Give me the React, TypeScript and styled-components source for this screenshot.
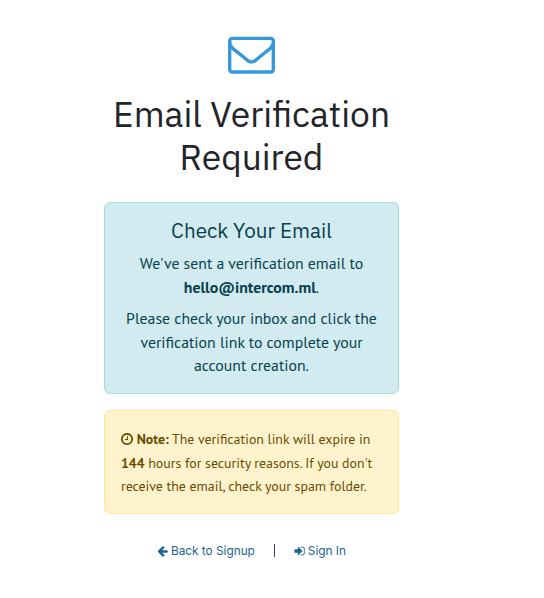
import React from "react";
import styled, { createGlobalStyle } from "styled-components";

const GlobalStyle = createGlobalStyle`
  *, *::before, *::after { box-sizing: border-box; }
  body { margin: 0; background: #fff; color: #212529; }
`;

const Page = styled.main`
  width: 295px;
  margin: 0 0 0 104px;
  padding-top: 31px;
  font-family: "PT Sans", "Noto Sans", sans-serif;
`;

const Header = styled.header`
  display: flex;
  flex-direction: column;
  align-items: center;
`;

const Title = styled.h1`
  margin: 16px 0 0;
  font: 400 35.4px/43px "IBM Plex Sans", Roboto, sans-serif;
  text-align: center;
`;

const Line = styled.span`
  display: block;
  white-space: nowrap;
`;

const Strong = styled.strong`
  font-weight: 700;
`;

const Alert = styled.section<{ $tone: "info" | "warning" }>`
  border: 1px solid ${(p) => (p.$tone === "info" ? "#a2dbe4" : "#ffe69c")};
  border-radius: 6px;
  background: ${(p) => (p.$tone === "info" ? "#d1ebf0" : "#fff3cd")};
  color: ${(p) => (p.$tone === "info" ? "#08414c" : "#664d03")};
`;

const InfoAlert = styled(Alert)`
  height: 192px;
  margin-top: 23px;
  padding: 15px 0;
  text-align: center;
`;

const NoteAlert = styled(Alert)`
  height: 104px;
  margin-top: 16px;
  padding: 17px 16px;
  font-size: 13.86px;
  line-height: 23.6px;
`;

const AlertTitle = styled.h2`
  margin: 0 0 9px;
  font: 400 20.65px/25px "IBM Plex Sans", Roboto, sans-serif;
`;

const Paragraph = styled.p`
  margin: 0 0 8px;
  font-size: 15.8px;
  line-height: 23.6px;
`;

const Links = styled.nav`
  display: flex;
  align-items: center;
  height: 20px;
  margin-top: 27px;
  padding-left: 53px;
  color: #1b6394;
  font: 400 11.8px/20px Inter, sans-serif;
`;

const Link = styled.a`
  display: inline-flex;
  align-items: center;
  gap: 2px;
  color: inherit;
  text-decoration: none;
  white-space: nowrap;
`;

const Divider = styled.span`
  width: 1px;
  height: 13px;
  margin: -2px 19px 0;
  background: #3c3b85;
`;

const Glyph = styled.svg<{ $size: number }>`
  width: ${(p) => p.$size}px;
  height: ${(p) => p.$size}px;
  flex: none;
  fill: currentColor;
`;

const EnvelopeGlyph = styled(Glyph)`
  margin: -1px 0 0;
  color: #3498db;
`;

const ClockGlyph = styled(Glyph)`
  vertical-align: -2px;
  margin: 0 -1px 0 -1px;
`;

const paths = {
  envelope:
    "M1664 1504v-768q-32 36-69 66-268 206-426 338-51 43-83 67t-86.500 48.500-102.500 24.500h-2q-48 0-102.500-24.500t-86.500-48.500-83-67q-158-132-426-338-37-30-69-66v768q0 13 9.500 22.500t22.500 9.500h1472q13 0 22.500-9.500t9.500-22.500zm0-1051v-24.500l-.5-13-3-12.500-5.500-9-9-7.500-14-2.500h-1472q-13 0-22.500 9.500t-9.500 22.500q0 168 147 284 193 152 401 317 6 5 35 29.500t46 37.500 44.500 31.500 50.500 27.500 43 9h2q20 0 43-9t50.500-27.500 44.500-31.500 46-37.500 35-29.500q208-165 401-317 54-43 100.500-115.500t46.500-131.500zm128-37v1088q0 66-47 113t-113 47h-1472q-66 0-113-47t-47-113v-1088q0-66 47-113t113-47h1472q66 0 113 47t47 113z",
  clock:
    "M1024 544v448q0 14-9 23t-23 9h-320q-14 0-23-9t-9-23v-64q0-14 9-23t23-9h224v-352q0-14 9-23t23-9h64q14 0 23 9t9 23zm416 352q0-148-73-273t-198-198-273-73-273 73-198 198-73 273 73 273 198 198 273 73 273-73 198-198 73-273zm224 0q0 209-103 385.500t-279.500 279.500-385.500 103-385.500-103-279.500-279.500-103-385.500 103-385.500 279.500-279.500 385.500-103 385.500 103 279.500 279.500 103 385.500z",
  arrow:
    "M1664 896v128q0 53-32.500 90.500t-84.500 37.500h-704l293 294q38 36 38 90t-38 90l-75 76q-37 37-90 37-52 0-91-37l-651-652q-37-37-37-90 0-52 37-91l651-650q38-38 91-38 52 0 90 38l75 74q38 38 38 91t-38 91l-293 293h704q52 0 84.500 37.500t32.500 90.500z",
  signIn:
    "M1312 896q0 26-19 45l-544 544q-19 19-45 19t-45-19-19-45v-288h-448q-26 0-45-19t-19-45v-384q0-26 19-45t45-19h448v-288q0-26 19-45t45-19 45 19l544 544q19 19 19 45zm352-352v704q0 119-84.500 203.500t-203.500 84.500h-320q-13 0-22.500-9.500t-9.500-22.500q0-4-1-20t-.5-26.500 3-23.500 10-19.500 20.500-6.500h320q66 0 113-47t47-113v-704q0-66-47-113t-113-47h-312l-11.500-1-11.500-3-8-5.500-7-9-2-13.500q0-4-1-20t-.5-26.500 3-23.500 10-19.500 20.500-6.500h320q119 0 203.500 84.500t84.500 203.500z",
};

export default function App() {
  return (
    <>
      <GlobalStyle />
      <Page>
        <Header>
          <EnvelopeGlyph $size={47} viewBox="0 0 1792 1792" aria-hidden="true">
            <path d={paths.envelope} />
          </EnvelopeGlyph>
          <Title>
            <Line>Email Verification</Line>
            <Line>Required</Line>
          </Title>
        </Header>

        <InfoAlert $tone="info">
          <AlertTitle>Check Your Email</AlertTitle>
          <Paragraph>
            <Line>We've sent a verification email to</Line>
            <Line>
              <Strong>hello@intercom.ml</Strong>.
            </Line>
          </Paragraph>
          <Paragraph>
            <Line>Please check your inbox and click the</Line>
            <Line>verification link to complete your</Line>
            <Line>account creation.</Line>
          </Paragraph>
        </InfoAlert>

        <NoteAlert $tone="warning">
          <Line>
            <ClockGlyph $size={14} viewBox="0 0 1792 1792" aria-hidden="true">
              <path d={paths.clock} />
            </ClockGlyph>{" "}
            <Strong>Note:</Strong> The verification link will expire in
          </Line>
          <Line>
            <Strong>144</Strong> hours for security reasons. If you don't
          </Line>
          <Line>receive the email, check your spam folder.</Line>
        </NoteAlert>

        <Links>
          <Link>
            <Glyph $size={12} viewBox="64 0 1792 1792" aria-hidden="true">
              <path d={paths.arrow} />
            </Glyph>
            Back to Signup
          </Link>
          <Divider />
          <Link>
            <Glyph $size={12} viewBox="64 0 1792 1792" aria-hidden="true">
              <path d={paths.signIn} />
            </Glyph>
            Sign In
          </Link>
        </Links>
      </Page>
    </>
  );
}
